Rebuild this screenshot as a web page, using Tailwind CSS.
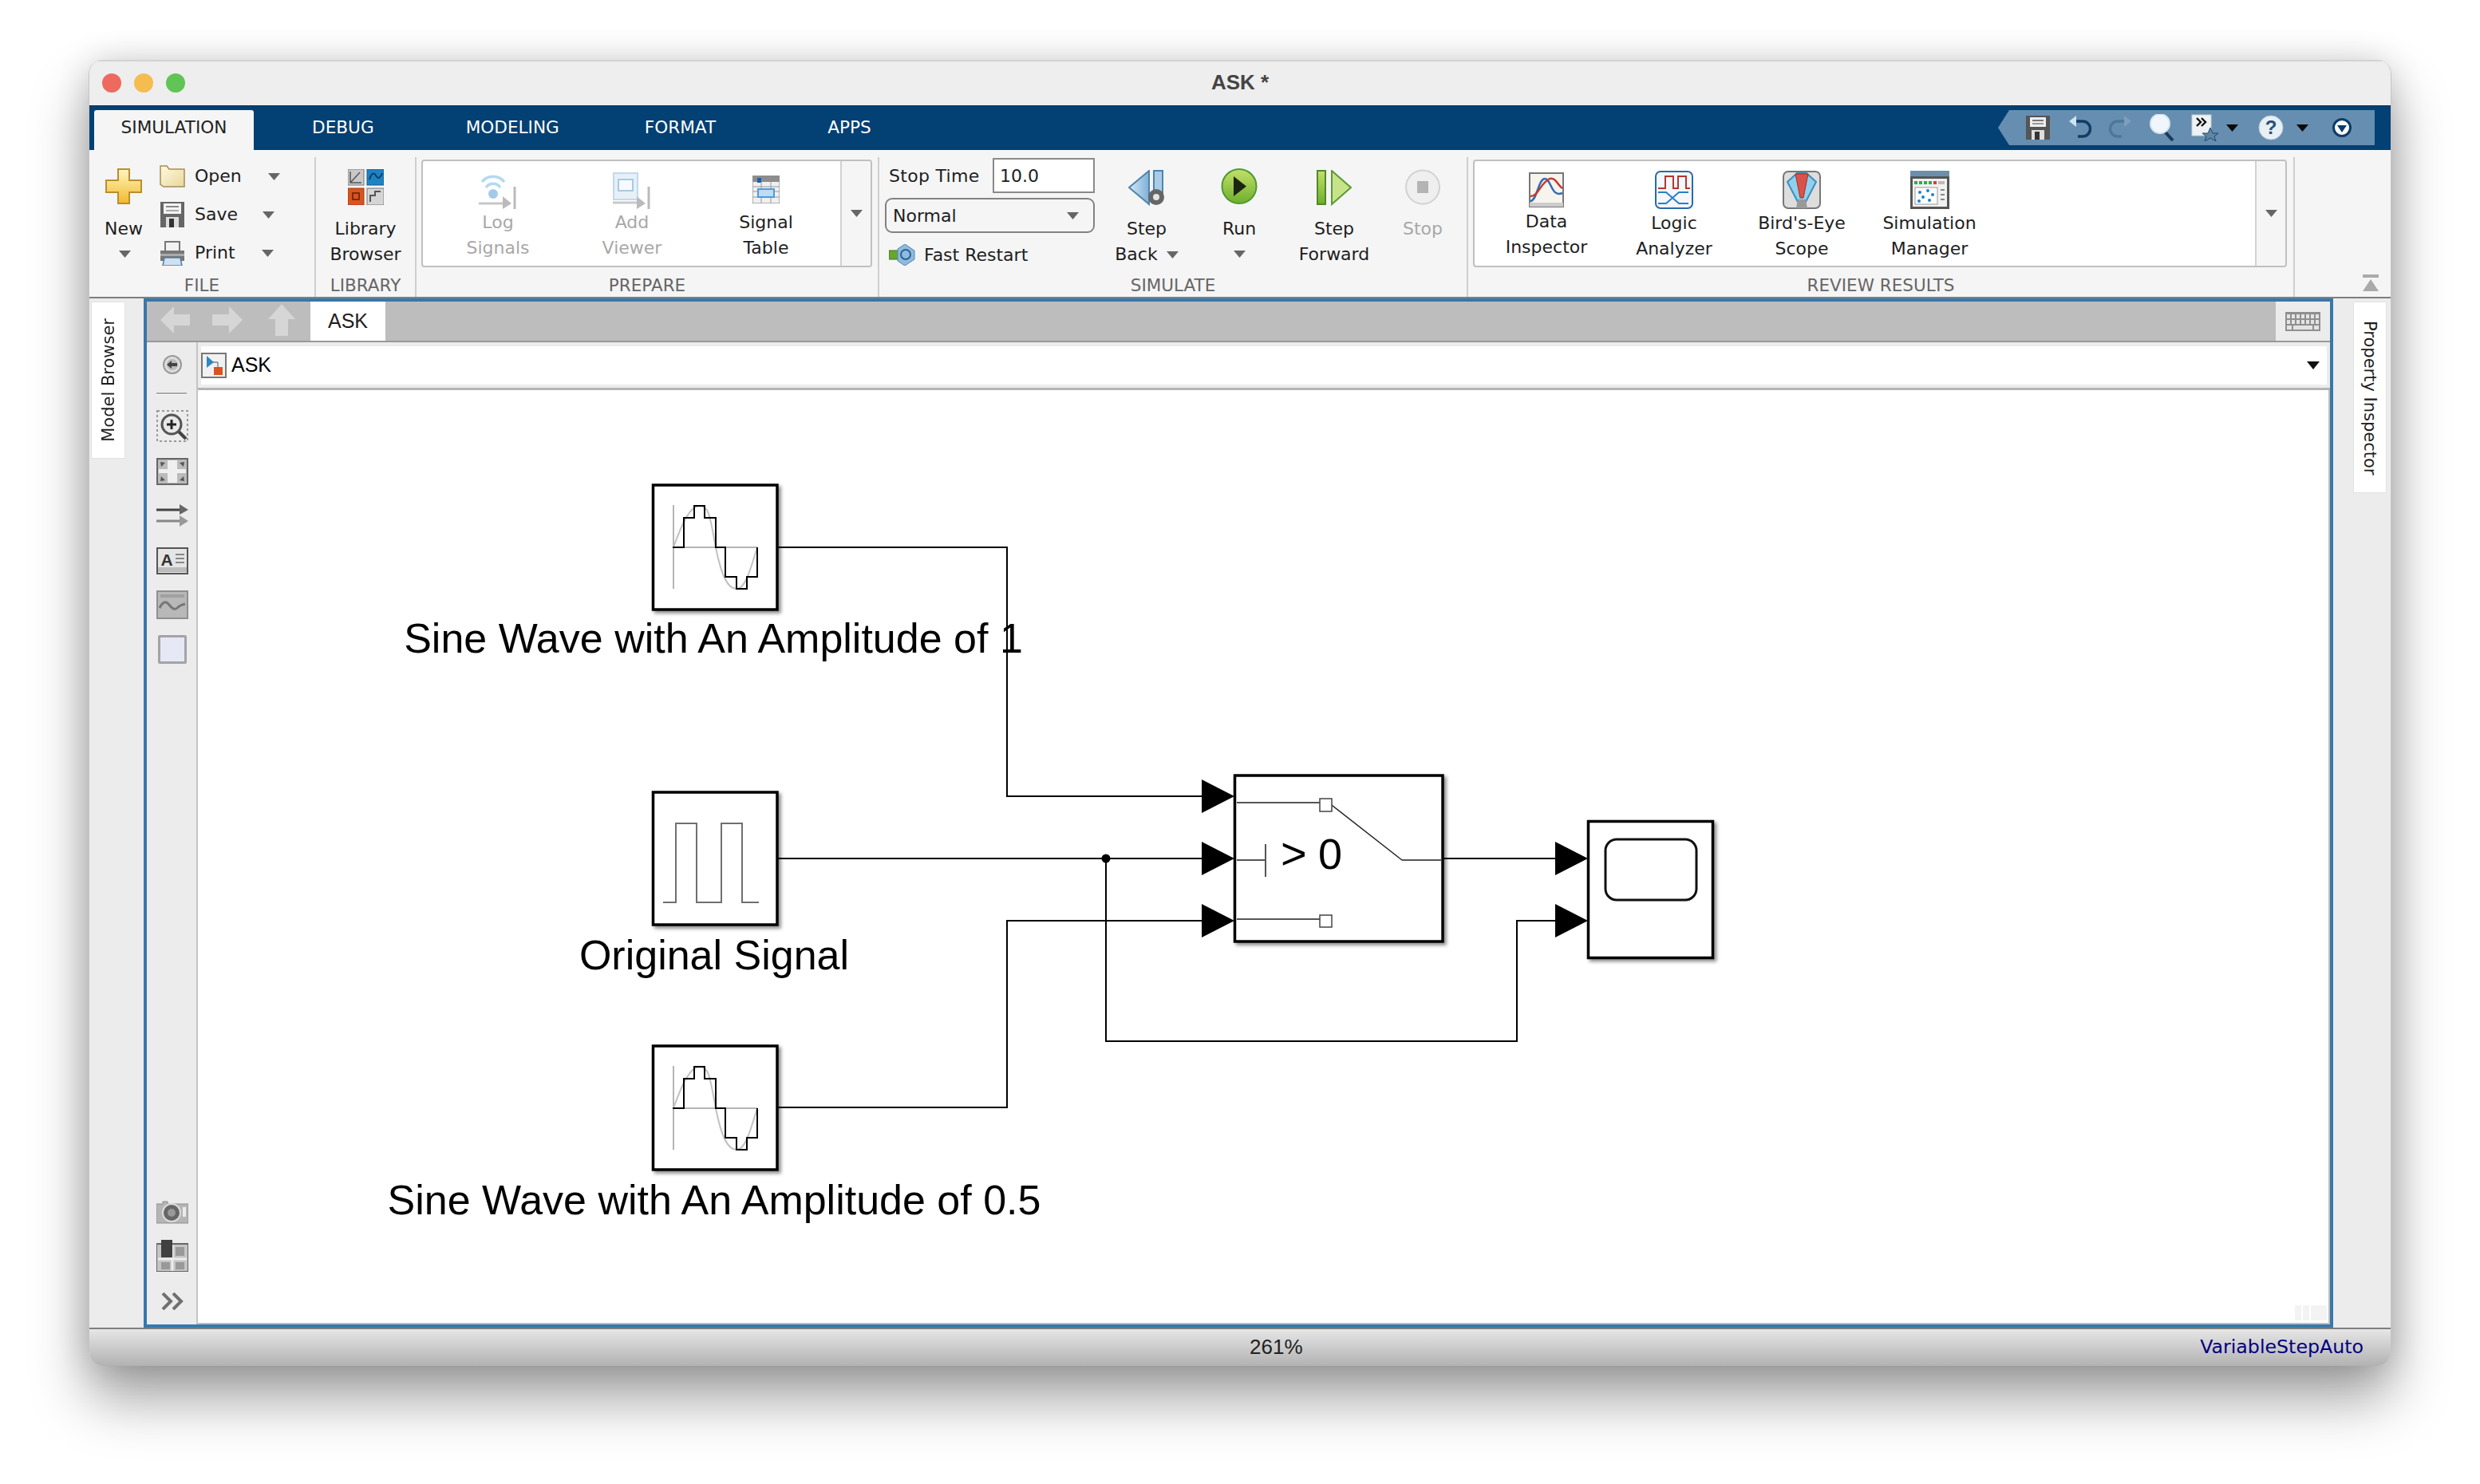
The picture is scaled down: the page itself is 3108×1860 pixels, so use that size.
<!DOCTYPE html>
<html><head><meta charset="utf-8"><title>ASK</title>
<script src="https://cdn.jsdelivr.net/npm/@tailwindcss/browser@4"></script></head>
<body class="bg-white m-0 w-[3108px] h-[1860px] overflow-hidden pt-[75px] pl-[111px] font-['DejaVu_Sans',sans-serif] text-[22px] text-[#1e1e1e]">
<svg width="0" height="0" class="absolute">
<defs>
<linearGradient id="gy" x1="0" y1="0" x2="0" y2="1"><stop offset="0" stop-color="#fff6c0"/><stop offset="1" stop-color="#f2b92c"/></linearGradient>
<linearGradient id="gg" x1="0" y1="0" x2="0" y2="1"><stop offset="0" stop-color="#c4e06a"/><stop offset="1" stop-color="#6fae2c"/></linearGradient>
<linearGradient id="gb" x1="0" y1="0" x2="1" y2="0"><stop offset="0" stop-color="#d4e8f6"/><stop offset="1" stop-color="#7eb0d6"/></linearGradient>
<linearGradient id="gf" x1="0" y1="0" x2="1" y2="1"><stop offset="0" stop-color="#fffbe0"/><stop offset="1" stop-color="#e8d79a"/></linearGradient>
</defs></svg>

<div class="w-[2886px] h-[1637px] flex flex-col rounded-[18px] overflow-hidden border-x border-[#c4c4c4] shadow-[0_40px_70px_rgba(0,0,0,0.38),0_0_40px_rgba(0,0,0,0.14)] bg-[#ececec]">
  <!-- title bar -->
  <div class="h-[57px] shrink-0 bg-[#eeeeee] border-t-2 border-[#d2d2d2] relative flex items-center justify-center">
    <div class="absolute left-[16px] top-[15px] flex gap-[16px]">
      <span class="w-[24px] h-[24px] rounded-full bg-[#ee6a5f]"></span>
      <span class="w-[24px] h-[24px] rounded-full bg-[#f5bd4f]"></span>
      <span class="w-[24px] h-[24px] rounded-full bg-[#61c454]"></span>
    </div>
    <span class="font-['Liberation_Sans'] font-bold text-[26px] text-[#444] mt-[-2px]">ASK *</span>
  </div>
  <!-- tab bar -->
  <div class="h-[56px] shrink-0 bg-[#034073] flex items-end relative text-white text-[21.6px] border-t border-[#022c52]">
    <div class="ml-[6px] w-[200px] h-[50px] bg-[#f5f5f5] rounded-t-[3px] text-[#222] flex items-center justify-center pb-[6px]">SIMULATION</div>
    <div class="h-[50px] flex items-center pb-[6px] ml-[73px]">DEBUG</div>
    <div class="h-[50px] flex items-center pb-[6px] ml-[115px]">MODELING</div>
    <div class="h-[50px] flex items-center pb-[6px] ml-[107px]">FORMAT</div>
    <div class="h-[50px] flex items-center pb-[6px] ml-[140px]">APPS</div>
    <!-- quick access -->
    <div class="ml-auto mr-[20px] mb-[6px] w-[472px] h-[44px] bg-[#668eb0] [clip-path:polygon(14px_0,100%_0,100%_100%,14px_100%,0_50%)] flex items-center">
      <svg class="ml-[34px]" width="32" height="32" viewBox="0 0 32 32"><path d="M1 1h30v30H1z" fill="#555"/><rect x="6" y="3" width="20" height="12" fill="#eee"/><rect x="9" y="6" width="14" height="2" fill="#777"/><rect x="9" y="10" width="14" height="2" fill="#999"/><rect x="8" y="19" width="16" height="12" fill="#ddd"/><rect x="12" y="21" width="6" height="10" fill="#333"/></svg>
      <svg class="ml-[22px]" width="30" height="32" viewBox="0 0 30 32" fill="none"><path d="M3 8h15a9 9 0 0 1 0 19h-6" stroke="#0f3d66" stroke-width="3.4"/><path d="M10 1v14L1 8z" fill="#cfe3f2"/></svg>
      <svg class="ml-[20px]" width="30" height="32" viewBox="0 0 30 32" fill="none"><path d="M27 8H12a9 9 0 0 0 0 19h5" stroke="#4f7797" stroke-width="3.4"/><path d="M20 1v14l9-7z" fill="#7e9fba"/></svg>
      <svg class="ml-[22px]" width="32" height="34" viewBox="0 0 32 34" fill="none"><path d="M19 22l10 11" stroke="#1b3a57" stroke-width="4"/><ellipse cx="13" cy="12" rx="12" ry="12" fill="#f0f6fb" stroke="#d8e4ee" stroke-width="2"/></svg>
      <svg class="ml-[20px]" width="34" height="34" viewBox="0 0 34 34"><rect x="1" y="1" width="24" height="26" fill="#eef2f5" stroke="#ccc"/><path d="M7 5l5 5-5 5M13 5l5 5-5 5" fill="none" stroke="#111" stroke-width="2.4"/><path d="M24 17l3 7h7l-5 4 2 6-7-4-7 4 2-6-5-4h7z" fill="#5f85a5" stroke="#22496c"/></svg>
      <svg class="ml-[10px]" width="15" height="9" viewBox="0 0 15 9"><path d="M0 0h15L7.500 9z" fill="#0b0b0b"/></svg>
      <svg class="ml-[25px]" width="32" height="32" viewBox="0 0 32 32"><circle cx="16" cy="16" r="15" fill="#e8eff5" stroke="#b9cad9"/><text x="16" y="24" text-anchor="middle" font-family="Liberation Sans" font-weight="700" font-size="24" fill="#24527a">?</text></svg>
      <svg class="ml-[16px]" width="15" height="9" viewBox="0 0 15 9"><path d="M0 0h15L7.500 9z" fill="#0b0b0b"/></svg>
      <svg class="ml-[30px]" width="24" height="24" viewBox="0 0 24 24"><circle cx="12" cy="12" r="10.500" fill="#fff" stroke="#0d3c68" stroke-width="3"/><path d="M6 9h12l-6 9z" fill="#0d3c68"/></svg>
    </div>
  </div>
  <!-- ribbon -->
  <div class="h-[186px] shrink-0 bg-[#f5f5f5] flex border-b-2 border-[#7f7f7f]">
    <!-- FILE -->
    <section class="w-[284px] shrink-0 flex flex-col border-r-2 border-[#cfcfcf] mt-[9px]">
      <div class="h-[147px] shrink-0 flex">
        <div class="ml-[20px] w-[46px] flex flex-col items-center pt-[14px]">
          <svg width="46" height="45" viewBox="0 0 46 45"><path d="M16 1h14v14h15v15H30v14H16V30H1V15h15z" fill="url(#gy)" stroke="#b98f2e" stroke-width="2"/></svg>
          <div class="leading-[32px] mt-[15px]">New</div>
          <svg class="mt-[11px] ml-[3px]" width="15" height="9" viewBox="0 0 15 9"><path d="M0 0h15L7.500 9z" fill="#666"/></svg>
        </div>
        <div class="ml-[22px] flex flex-col">
          <div class="h-[48px] flex items-center">
            <svg width="32" height="28" viewBox="0 0 32 28"><path d="M1 3h10l2 3h18v21H4z" fill="#c8a96a"/><path d="M1 1h8l3 4h19v22H5L1 24z" fill="url(#gf)" stroke="#a68c55" stroke-width="1.500"/></svg>
            <span class="ml-[12px] w-[92px] leading-[32px]">Open</span>
            <svg width="15" height="9" viewBox="0 0 15 9"><path d="M0 0h15L7.500 9z" fill="#666"/></svg>
          </div>
          <div class="h-[48px] flex items-center">
            <svg width="32" height="32" viewBox="0 0 32 32"><path d="M1 0h30v32H1z" fill="#666"/><rect x="5" y="2" width="22" height="13" fill="#f3f3f3"/><rect x="8" y="5" width="16" height="2" fill="#888"/><rect x="8" y="10" width="16" height="2" fill="#aaa"/><rect x="8" y="19" width="16" height="13" fill="#ddd"/><rect x="12" y="21" width="6" height="11" fill="#333"/></svg>
            <span class="ml-[12px] w-[85px] leading-[32px]">Save</span>
            <svg width="15" height="9" viewBox="0 0 15 9"><path d="M0 0h15L7.500 9z" fill="#666"/></svg>
          </div>
          <div class="h-[48px] flex items-center">
            <svg width="32" height="31" viewBox="0 0 32 31"><rect x="7" y="1" width="18" height="12" fill="#f2f2f2" stroke="#777" stroke-width="2"/><path d="M1 12h30v13H1z" fill="#777"/><rect x="1" y="16" width="30" height="3" fill="#aaa"/><path d="M6 21h20l2 10H4z" fill="#cfe0ee" stroke="#4e7ea8" stroke-width="1.500"/></svg>
            <span class="ml-[12px] w-[84px] leading-[32px]">Print</span>
            <svg width="15" height="9" viewBox="0 0 15 9"><path d="M0 0h15L7.500 9z" fill="#666"/></svg>
          </div>
        </div>
      </div>
      <div class="h-[28px] shrink-0 text-center text-[21.5px] text-[#666] leading-[28px]">FILE</div>
    </section>
    <!-- LIBRARY -->
    <section class="w-[126px] shrink-0 flex flex-col border-r-2 border-[#cfcfcf] mt-[9px]">
      <div class="h-[147px] shrink-0 flex flex-col items-center pt-[15px]">
        <svg width="45" height="45" viewBox="0 0 45 45"><rect x="0" y="0" width="20" height="20" fill="#c9c9c9" stroke="#777"/><path d="M3 17L15 4M3 3v14h14" fill="none" stroke="#555" stroke-width="1.500"/><rect x="24" y="0" width="21" height="20" fill="#1f82c4" stroke="#155f94"/><path d="M27 13q4-12 8-5t8-3" fill="none" stroke="#0d3f66" stroke-width="2"/><rect x="0" y="24" width="20" height="21" fill="#d9541e" stroke="#a43a10"/><rect x="6" y="30" width="8" height="8" fill="none" stroke="#7e2b08" stroke-width="2"/><rect x="24" y="24" width="21" height="21" fill="#d5d5d5" stroke="#777"/><path d="M28 41v-8h6v-5h7" fill="none" stroke="#555" stroke-width="2"/></svg>
        <div class="leading-[32px] mt-[14px] text-center">Library<br>Browser</div>
      </div>
      <div class="h-[28px] shrink-0 text-center text-[21.5px] text-[#666] leading-[28px]">LIBRARY</div>
    </section>
    <!-- PREPARE -->
    <section class="w-[580px] shrink-0 flex flex-col border-r-2 border-[#cfcfcf] mt-[9px]">
      <div class="h-[147px] shrink-0 pl-[6px] pt-[3px]">
        <div class="w-[565px] h-[135px] bg-white border-2 border-[#c0c0c0] rounded-[4px] flex">
          <div class="ml-[10px] w-[168px] flex flex-col items-center pt-[14px] text-[#a8a8a8]">
            <svg width="48" height="46" viewBox="0 0 48 46" fill="none"><path d="M4 12a18 18 0 0 1 28 0" stroke="#b5d9f0" stroke-width="3.500"/><path d="M9 19a11 11 0 0 1 18 0" stroke="#b5d9f0" stroke-width="3.500"/><circle cx="18" cy="27" r="6" fill="#a4cbe6"/><path d="M0 39h36" stroke="#c8c8c8" stroke-width="3"/><path d="M30 30l11 9-11 7z" fill="#bbb"/><path d="M45 18v28" stroke="#bbb" stroke-width="3"/></svg>
            <div class="leading-[32px] mt-[1px] text-center">Log<br>Signals</div>
          </div>
          <div class="w-[168px] flex flex-col items-center pt-[14px] text-[#a8a8a8]">
            <svg width="48" height="46" viewBox="0 0 48 46" fill="none"><rect x="1" y="1" width="30" height="33" fill="#e6f0f8" stroke="#c4d8e8" stroke-width="2"/><rect x="7" y="9" width="18" height="14" fill="#f7fbff" stroke="#a8cae2" stroke-width="2"/><path d="M0 38h36" stroke="#c8c8c8" stroke-width="3"/><path d="M30 30l11 9-11 7z" fill="#bbb"/><path d="M45 18v28" stroke="#bbb" stroke-width="3"/></svg>
            <div class="leading-[32px] mt-[1px] text-center">Add<br>Viewer</div>
          </div>
          <div class="w-[168px] flex flex-col items-center pt-[18px]">
            <svg width="34" height="35" viewBox="0 0 34 35" fill="none"><rect x="0" y="0" width="34" height="35" fill="#f0f0f0" stroke="#777"/><rect x="0" y="0" width="34" height="8" fill="#8d8d8d"/><rect x="6" y="3" width="5" height="6" fill="#1a5fb4"/><path d="M0 14h34M0 20h34M0 27h34M11 8v27M23 8v27" stroke="#999"/><rect x="7" y="17" width="20" height="10" fill="#bfdcf5" stroke="#4f9bdc" stroke-width="2"/></svg>
            <div class="leading-[32px] mt-[8px] text-center">Signal<br>Table</div>
          </div>
          <div class="ml-auto w-[38px] border-l-2 border-[#d2d2d2] bg-[#f5f5f5] rounded-r-[4px] flex items-center justify-center">
            <svg width="15" height="9" viewBox="0 0 15 9"><path d="M0 0h15L7.500 9z" fill="#666"/></svg>
          </div>
        </div>
      </div>
      <div class="h-[28px] shrink-0 text-center text-[21.5px] text-[#666] leading-[28px]">PREPARE</div>
    </section>
    <!-- SIMULATE -->
    <section class="w-[738px] shrink-0 flex flex-col border-r-2 border-[#cfcfcf] mt-[9px]">
      <div class="h-[147px] shrink-0 flex">
        <div class="ml-[7px] w-[263px] flex flex-col">
          <div class="h-[44px] mt-[1px] flex items-center">
            <span class="ml-[5px] w-[130px] tracking-[0.3px]">Stop Time</span>
            <div class="w-[128px] h-[44px] bg-white border-2 border-[#8a8a8a] flex items-center pl-[7px]">10.0</div>
          </div>
          <div class="h-[44px] mt-[6px] w-[263px] border-2 border-[#828282] rounded-[9px] flex items-center justify-between pl-[8px] pr-[18px]">
            <span>Normal</span>
            <svg width="15" height="9" viewBox="0 0 15 9"><path d="M0 0h15L7.500 9z" fill="#666"/></svg>
          </div>
          <div class="flex items-center mt-[11px] ml-[5px]">
            <svg width="33" height="27" viewBox="0 0 33 27"><rect x="0" y="8" width="12" height="11" fill="#6aa62e" stroke="#3d7416"/><path d="M20 0l12 8v11l-12 8-9-6V6z" fill="#8dbbdf" stroke="#4c86b5"/><circle cx="21" cy="13" r="6" fill="none" stroke="#2c628f" stroke-width="2"/></svg>
            <span class="ml-[11px]">Fast Restart</span>
          </div>
        </div>
        <div class="ml-[7px] w-[116px] flex flex-col items-center pt-[16px]">
          <svg width="46" height="45" viewBox="0 0 46 45"><path d="M26 1L1 22l25 21z" fill="url(#gb)" stroke="#4f84ad" stroke-width="2"/><rect x="32" y="1" width="11" height="28" fill="#a9cde8" stroke="#4f84ad" stroke-width="2"/><circle cx="35" cy="34" r="10" fill="#666"/><circle cx="35" cy="34" r="4" fill="#e5e5e5"/></svg>
          <div class="leading-[32px] mt-[13px] text-center">Step</div>
          <div class="flex items-center gap-[11px] leading-[32px]"><span>Back</span><svg width="15" height="9" viewBox="0 0 15 9"><path d="M0 0h15L7.500 9z" fill="#666"/></svg></div>
        </div>
        <div class="w-[116px] flex flex-col items-center pt-[14px]">
          <svg width="46" height="45" viewBox="0 0 46 45"><circle cx="23" cy="22.500" r="21.500" fill="url(#gg)" stroke="#4d9a33" stroke-width="2"/><path d="M16 10l16 12.500L16 35z" fill="#1c2412"/></svg>
          <div class="leading-[32px] mt-[15px] text-center">Run</div>
          <svg class="mt-[11px]" width="15" height="9" viewBox="0 0 15 9"><path d="M0 0h15L7.500 9z" fill="#666"/></svg>
        </div>
        <div class="w-[122px] flex flex-col items-center pt-[16px]">
          <svg width="44" height="45" viewBox="0 0 44 45"><rect x="1" y="1" width="10" height="42" fill="url(#gg)" stroke="#4d8a2d" stroke-width="2"/><path d="M19 1l24 21-24 21z" fill="#c6e38a" stroke="#5c9a33" stroke-width="2"/></svg>
          <div class="leading-[32px] mt-[13px] text-center">Step<br>Forward</div>
        </div>
        <div class="w-[100px] flex flex-col items-center pt-[15px] text-[#a8a8a8]">
          <svg width="44" height="45" viewBox="0 0 44 45"><circle cx="22" cy="22.500" r="21" fill="#efefef" stroke="#d2d2d2" stroke-width="2"/><rect x="15" y="15" width="14" height="15" fill="#b4b4b4"/></svg>
          <div class="leading-[32px] mt-[14px] text-center">Stop</div>
        </div>
      </div>
      <div class="h-[28px] shrink-0 text-center text-[21.5px] text-[#666] leading-[28px]">SIMULATE</div>
    </section>
    <!-- REVIEW -->
    <section class="w-[1036px] shrink-0 flex flex-col border-r-2 border-[#cfcfcf] mt-[9px]">
      <div class="h-[147px] shrink-0 pl-[6px] pt-[3px]">
        <div class="w-[1020px] h-[135px] bg-white border-2 border-[#c0c0c0] rounded-[4px] flex">
          <div class="ml-[10px] w-[160px] flex flex-col items-center pt-[14px]">
            <svg width="44" height="44" viewBox="0 0 44 44" fill="none"><rect x="1" y="1" width="42" height="42" fill="#f7f4ee" stroke="#777" stroke-width="2"/><rect x="1" y="38" width="42" height="5" fill="#ccc"/><path d="M2 36C10 36 12 8 20 8s8 24 22 18" stroke="#2f6fb5" stroke-width="2.500"/><path d="M2 30C12 30 14 14 26 8c8-2 10 8 16 12" stroke="#c9382b" stroke-width="2.500"/></svg>
            <div class="leading-[32px] mt-[2px] text-center">Data<br>Inspector</div>
          </div>
          <div class="w-[160px] flex flex-col items-center pt-[12px]">
            <svg width="48" height="48" viewBox="0 0 48 48" fill="none"><rect x="1" y="1" width="46" height="46" rx="6" fill="#f4f7fb" stroke="#2a69ad" stroke-width="2"/><path d="M4 22h9V7h10v15h6V7h10v15h5" stroke="#b6362d" stroke-width="2"/><path d="M4 27h10l16 14h12M4 41h10l16-14h12" stroke="#2a7fc4" stroke-width="2"/></svg>
            <div class="leading-[32px] mt-[2px] text-center">Logic<br>Analyzer</div>
          </div>
          <div class="w-[160px] flex flex-col items-center pt-[12px]">
            <svg width="48" height="48" viewBox="0 0 48 48" fill="none"><rect x="1" y="1" width="46" height="46" rx="6" fill="#ddd" stroke="#777" stroke-width="2"/><path d="M6 14L18 3h12l12 11-13 25h-10z" fill="#8fd0ef" stroke="#3e8dbb" stroke-width="2"/><path d="M16 4h16l-6 30h-4z" fill="#d9534a" stroke="#a5302a"/><path d="M19 36h10l2 11H17z" fill="#999"/></svg>
            <div class="leading-[32px] mt-[2px] text-center">Bird's-Eye<br>Scope</div>
          </div>
          <div class="w-[160px] flex flex-col items-center pt-[12px]">
            <svg width="49" height="48" viewBox="0 0 49 48" fill="none"><rect x="0" y="0" width="49" height="48" fill="#555"/><rect x="0" y="0" width="49" height="7" fill="#6d8fae"/><rect x="3" y="10" width="43" height="35" fill="#f1f1f1"/><path d="M5 15h4M11 15h4M17 15h4M23 15h4" stroke="#29b04a" stroke-width="4"/><path d="M29 15h4" stroke="#e23b3b" stroke-width="4"/><path d="M35 15h8" stroke="#bbb" stroke-width="4"/><rect x="6" y="21" width="28" height="21" fill="#fff" stroke="#999"/><g fill="#1c84c9"><circle cx="12" cy="27" r="2"/><circle cx="22" cy="25" r="2"/><circle cx="28" cy="30" r="2"/><circle cx="16" cy="33" r="2"/><circle cx="24" cy="37" r="2"/><circle cx="11" cy="38" r="2"/></g><path d="M38 24h5M38 30h5M38 36h5" stroke="#888" stroke-width="2"/></svg>
            <div class="leading-[32px] mt-[2px] text-center">Simulation<br>Manager</div>
          </div>
          <div class="ml-auto w-[38px] border-l-2 border-[#d2d2d2] bg-[#f5f5f5] rounded-r-[4px] flex items-center justify-center">
            <svg width="15" height="9" viewBox="0 0 15 9"><path d="M0 0h15L7.500 9z" fill="#666"/></svg>
          </div>
        </div>
      </div>
      <div class="h-[28px] shrink-0 text-center text-[21.5px] text-[#666] leading-[28px]">REVIEW RESULTS</div>
    </section>
    <div class="flex-1 flex items-end justify-end pr-[14px] pb-[6px]">
      <svg width="22" height="22" viewBox="0 0 22 22"><rect x="1" y="0" width="20" height="4" fill="#aaa"/><path d="M11 6l10 15H1z" fill="#aaa"/></svg>
    </div>
  </div>
  <!-- main -->
  <div class="flex-1 min-h-0 flex">
    <div class="w-[68px] shrink-0 pt-[4px] pl-[2px] bg-[#ececec]">
      <div class="w-[43px] h-[197px] bg-white border border-[#e2e2e2] flex items-center justify-center pl-[3px]">
        <span class="[writing-mode:vertical-rl] rotate-180 text-[21px] whitespace-nowrap">Model Browser</span>
      </div>
    </div>
    <!-- editor -->
    <div class="flex-1 min-w-0 border-4 border-[#3778ab] flex flex-col">
      <div class="h-[51px] shrink-0 bg-[#bdbdbd] border-b-2 border-[#999] flex">
        <svg class="ml-[16px] mt-[5px]" width="38" height="36" viewBox="0 0 38 36"><path d="M18 1L1 18l17 17V25h20V11H18z" fill="#d6d6d6"/></svg>
        <svg class="ml-[27px] mt-[5px]" width="40" height="36" viewBox="0 0 40 36"><path d="M22 1l17 17-17 17V25H1V11h21z" fill="#d6d6d6"/></svg>
        <svg class="ml-[31px] mt-[3px]" width="34" height="40" viewBox="0 0 34 40"><path d="M17 0l17 19H25v21H9V19H0z" fill="#d6d6d6"/></svg>
        <div class="ml-[19px] w-[94px] h-[49px] bg-white flex items-center justify-center font-['Liberation_Sans'] text-[25px]">ASK</div>
        <div class="ml-auto w-[68px] h-[49px] bg-[#ececec] flex items-center justify-center">
          <svg width="44" height="24" viewBox="0 0 44 24"><rect width="44" height="24" fill="#8f8f8f"/><g fill="#e4e4e4"><rect x="2" y="3" width="4" height="5"/><rect x="8" y="3" width="4" height="5"/><rect x="14" y="3" width="4" height="5"/><rect x="20" y="3" width="4" height="5"/><rect x="26" y="3" width="4" height="5"/><rect x="32" y="3" width="4" height="5"/><rect x="38" y="3" width="4" height="5"/><rect x="2" y="10" width="4" height="5"/><rect x="8" y="10" width="4" height="5"/><rect x="14" y="10" width="4" height="5"/><rect x="20" y="10" width="4" height="5"/><rect x="26" y="10" width="4" height="5"/><rect x="32" y="10" width="4" height="5"/><rect x="38" y="10" width="4" height="5"/><rect x="2" y="17" width="6" height="5"/><rect x="10" y="17" width="24" height="5"/><rect x="36" y="17" width="6" height="5"/></g></svg>
        </div>
      </div>
      <div class="flex-1 min-h-0 flex">
        <!-- left toolbar -->
        <div class="w-[64px] shrink-0 bg-[#ececec] border-r-2 border-[#c4c4c4] flex flex-col items-center pb-[18px]">
          <svg class="mt-[16px] ml-[2px]" width="24" height="24" viewBox="0 0 24 24"><circle cx="12" cy="12" r="11" fill="#ddd" stroke="#9a9a9a" stroke-width="2"/><circle cx="12" cy="12" r="7" fill="#bbb"/><path d="M5 12l6-5v3h7v4h-7v3z" fill="#444"/></svg>
          <div class="mt-[23px] w-[38px] h-[3px] bg-[#aaa] border-b border-white"></div>
          <svg class="mt-[19px] ml-[2px]" width="40" height="40" viewBox="0 0 40 40" fill="none"><rect x="1" y="1" width="38" height="38" stroke="#999" stroke-width="2" stroke-dasharray="3 3"/><circle cx="19" cy="18" r="12" fill="#e8e8e8" stroke="#555" stroke-width="3"/><path d="M19 12v12M13 18h12" stroke="#222" stroke-width="3"/><path d="M28 27l9 9" stroke="#444" stroke-width="4"/></svg>
          <svg class="mt-[20px] ml-[2px]" width="40" height="34" viewBox="0 0 40 34"><rect x="1" y="1" width="38" height="32" fill="#bbb" stroke="#666" stroke-width="2"/><rect x="14" y="3" width="12" height="28" fill="#efefef"/><rect x="3" y="14" width="34" height="5" fill="#efefef"/><path d="M5 5l6 1-5 5zM35 5l-6 1 5 5zM5 29l6-1-5-5zM35 29l-6-1 5-5z" fill="#555"/></svg>
          <svg class="mt-[24px] ml-[2px]" width="40" height="28" viewBox="0 0 40 28" fill="none"><path d="M0 7h32" stroke="#444" stroke-width="3"/><path d="M0 21h32" stroke="#888" stroke-width="3"/><path d="M29 0l11 7-11 6z" fill="#666"/><path d="M29 14l11 7-11 7z" fill="#999"/></svg>
          <svg class="mt-[26px] ml-[2px]" width="40" height="34" viewBox="0 0 40 34"><rect x="1" y="1" width="38" height="32" fill="#e5e5e5" stroke="#555" stroke-width="2"/><rect x="2" y="25" width="36" height="6" fill="#bbb"/><text x="13" y="23" text-anchor="middle" font-family="Liberation Sans" font-weight="700" font-size="21" fill="#333">A</text><path d="M24 9h11M24 14h11M24 19h11" stroke="#888" stroke-width="2"/></svg>
          <svg class="mt-[20px] ml-[2px]" width="40" height="36" viewBox="0 0 40 36" fill="none"><rect x="1" y="1" width="38" height="34" fill="#b8b8b8" stroke="#8f8f8f" stroke-width="2"/><rect x="5" y="5" width="30" height="4" fill="#a0a0a0"/><path d="M4 22q6-12 12-4t10 4 10-5" stroke="#777" stroke-width="3"/></svg>
          <div class="mt-[20px] ml-[2px] w-[36px] h-[36px] bg-[#e6e8f5] border-[3px] border-[#a4a4a8] rounded-[2px]"></div>
          <svg class="mt-auto ml-[2px]" width="40" height="31" viewBox="0 0 40 31"><path d="M8 3h6v3h26v24H0V6h8z" fill="#b5b5b5" stroke="#8d8d8d"/><circle cx="19" cy="17" r="11" fill="#666" stroke="#ddd" stroke-width="2"/><circle cx="19" cy="17" r="5" fill="#999"/><rect x="33" y="10" width="4" height="12" fill="#ececec"/></svg>
          <svg class="mt-[20px] ml-[2px]" width="40" height="40" viewBox="0 0 40 40"><rect x="0" y="5" width="40" height="35" fill="#c5c5c5" stroke="#666" stroke-width="2"/><path d="M20 6v33M2 24h36" stroke="#ececec" stroke-width="3"/><rect x="24" y="9" width="11" height="11" fill="#999"/><rect x="24" y="28" width="11" height="9" fill="#999"/><rect x="6" y="28" width="11" height="9" fill="#999"/><rect x="6" y="0" width="14" height="22" fill="#404040"/></svg>
          <svg class="mt-[26px] ml-[2px]" width="28" height="22" viewBox="0 0 28 22" fill="none"><path d="M2 1l10 10L2 21M15 1l10 10-10 10" stroke="#707070" stroke-width="4"/></svg>
        </div>
        <div class="flex-1 min-w-0 flex flex-col">
          <!-- address -->
          <div class="h-[60px] shrink-0 bg-[#ececec] border-b-[3px] border-[#b4b4b4] pt-[5px] pl-[4px] pr-[4px]">
            <div class="h-[48px] bg-white flex items-center">
              <svg width="32" height="32" viewBox="0 0 32 32"><rect x="1" y="1" width="30" height="30" fill="#f1f1f1" stroke="#777" stroke-width="2"/><path d="M7 4l9 8-9 7z" fill="#2e86c5"/><path d="M15 12h6v6" fill="none" stroke="#555"/><rect x="16" y="18" width="11" height="10" fill="#d9541e"/></svg>
              <span class="ml-[6px] font-['Liberation_Sans'] text-[25px] text-black">ASK</span>
              <svg class="ml-auto mr-[9px]" width="16" height="10" viewBox="0 0 16 10"><path d="M0 0h16L8 10z" fill="#111"/></svg>
            </div>
          </div>
          <!-- canvas -->
          <div class="flex-1 min-h-0 bg-white relative border-r-2 border-b-2 border-[#c0c0c0]">
            <svg class="block" width="2670" height="1169" viewBox="248 489 2670 1169" fill="none" font-family="Liberation Sans">
              <!-- wires -->
              <g stroke="#000" stroke-width="2">
                <path d="M975 686H1262V998H1510"/>
                <path d="M975 1076H1510"/>
                <path d="M975 1388H1262V1154H1510"/>
                <path d="M1386 1076V1305H1901V1154H1952"/>
                <path d="M1809 1076H1952"/>
              </g>
              <circle cx="1386" cy="1076" r="5.500" fill="#000"/>
              <g fill="#000">
                <path d="M1506 977L1547 998 1506 1019z"/>
                <path d="M1506 1055L1547 1076 1506 1097z"/>
                <path d="M1506 1133L1547 1154 1506 1175z"/>
                <path d="M1949 1055L1990 1076 1949 1097z"/>
                <path d="M1949 1133L1990 1154 1949 1175z"/>
              </g>
              <!-- blocks -->
              <g fill="#fff" stroke="#000" stroke-width="3.500" class="drop-shadow-[3px_3px_2px_rgba(0,0,0,0.45)]">
                <rect x="818.500" y="608" width="155.500" height="156"/>
                <rect x="818.500" y="993" width="155.500" height="166"/>
                <rect x="818.500" y="1311" width="155.500" height="155"/>
                <rect x="1547.500" y="972" width="260.500" height="208"/>
                <rect x="1990.500" y="1029.500" width="156" height="171"/>
              </g>
              <!-- sine 1 -->
              <g>
                <path d="M844 633V738M844 686H949" stroke="#b5b5b5" stroke-width="2"/>
                <path d="M844 686C855 655 865 634 877 634S890 650 897 686S912 738 923 738S940 715 949 686" stroke="#c2c2c2" stroke-width="2"/>
                <path d="M843 686H857V649H870V634H883V649H897V686H909V723H923V738H936V723H949V686" stroke="#000" stroke-width="2"/>
              </g>
              <!-- sine 2 -->
              <g transform="translate(0 703)">
                <path d="M844 633V738M844 686H949" stroke="#b5b5b5" stroke-width="2"/>
                <path d="M844 686C855 655 865 634 877 634S890 650 897 686S912 738 923 738S940 715 949 686" stroke="#c2c2c2" stroke-width="2"/>
                <path d="M843 686H857V649H870V634H883V649H897V686H909V723H923V738H936V723H949V686" stroke="#000" stroke-width="2"/>
              </g>
              <!-- pulse -->
              <path d="M831 1131H847V1032H873V1131H904V1032H930V1131H951" stroke="#707070" stroke-width="2"/>
              <!-- switch -->
              <g stroke="#555" stroke-width="2">
                <path d="M1550 1006H1654M1550 1078H1586M1586 1058V1099M1550 1152H1654M1757 1078H1807"/>
              </g>
              <path d="M1665 1006L1757 1078" stroke="#222" stroke-width="1.500"/>
              <rect x="1654" y="1001" width="15" height="16" fill="#fff" stroke="#444" stroke-width="1.500"/>
              <rect x="1654" y="1147" width="15" height="15" fill="#fff" stroke="#444" stroke-width="1.500"/>
              <text x="1605" y="1089" font-size="56" fill="#000">&gt;</text>
              <text x="1652" y="1089" font-size="54" fill="#000">0</text>
              <!-- scope screen -->
              <rect x="2012" y="1052" width="114" height="76" rx="14" fill="#fff" stroke="#111" stroke-width="3"/>
              <!-- labels -->
              <g fill="#000" font-size="52" text-anchor="middle">
                <text x="894" y="818">Sine Wave with An Amplitude of 1</text>
                <text x="895" y="1215">Original Signal</text>
                <text x="895" y="1522">Sine Wave with An Amplitude of 0.5</text>
              </g>
              <g fill="#f3f3f3"><rect x="2876" y="1636" width="8" height="19"/><rect x="2886" y="1636" width="8" height="19"/><rect x="2896" y="1636" width="20" height="19"/></g>
            </svg>
          </div>
        </div>
      </div>
    </div>
    <div class="w-[72px] shrink-0 pt-[4px] pl-[25px] bg-[#ececec]">
      <div class="w-[42px] h-[240px] bg-white border border-[#e2e2e2] flex justify-center pt-[23px] pr-[2px]">
        <span class="[writing-mode:vertical-rl] text-[21px] whitespace-nowrap">Property Inspector</span>
      </div>
    </div>
  </div>
  <!-- status -->
  <div class="h-[48px] shrink-0 border-t-2 border-[#7f7f7f] bg-gradient-to-b from-[#e6e6e6] to-[#b2b2b2] flex items-center relative">
    <span class="absolute left-[1454px] top-[3px] text-[#222] font-['Liberation_Sans'] text-[26px]">261%</span>
    <span class="ml-auto mr-[34px] text-[23.7px] text-[#000080]">VariableStepAuto</span>
  </div>
</div>
</body></html>
